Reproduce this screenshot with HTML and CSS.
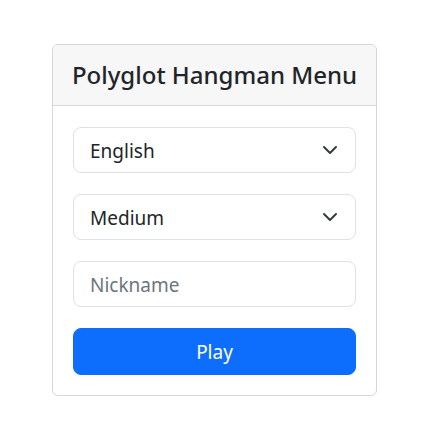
FILE: index.html
```html
<!DOCTYPE html>
<html lang="en">
<head>
<meta charset="utf-8">
<title>Polyglot Hangman Menu</title>
<link rel="stylesheet" href="styles.css">
</head>
<body>
<main class="page">
  <section class="card">
    <header class="card-header">
      <h1 class="title">Polyglot Hangman Menu</h1>
    </header>
    <form class="card-body">
      <div class="select">
        <span class="select-value">English</span>
        <svg class="chevron" viewBox="0 0 16 16" width="16" height="16"><path d="m2 5 6 6 6-6" fill="none" stroke="#343a40" stroke-width="2" stroke-linecap="round" stroke-linejoin="round"/></svg>
      </div>
      <div class="select">
        <span class="select-value">Medium</span>
        <svg class="chevron" viewBox="0 0 16 16" width="16" height="16"><path d="m2 5 6 6 6-6" fill="none" stroke="#343a40" stroke-width="2" stroke-linecap="round" stroke-linejoin="round"/></svg>
      </div>
      <input class="input" type="text" placeholder="Nickname">
      <button class="btn" type="button">Play</button>
    </form>
  </section>
</main>
</body>
</html>
```

FILE: styles.css
```css
html, body {
  margin: 0;
  padding: 0;
  background: #fff;
}
body {
  font-family: "Noto Sans", "Open Sans", sans-serif;
  color: #212529;
}
.page {
  display: flex;
  justify-content: center;
  padding-top: 44px;
}
.card {
  width: 325px;
  box-sizing: border-box;
  border: 1px solid #d6d6d6;
  border-radius: 6px;
  background: #fff;
  overflow: hidden;
}
.card-header {
  height: 61px;
  box-sizing: border-box;
  background: #f7f7f7;
  border-bottom: 1px solid #d6d6d6;
  display: flex;
  align-items: center;
  justify-content: center;
}
.title {
  margin: 0;
  font-size: 24px;
  font-weight: 500;
  line-height: 1.2;
  color: #212529;
}
.card-body {
  padding: 21px 20px 20px;
  display: flex;
  flex-direction: column;
  gap: 21px;
  margin: 0;
}
.select, .input {
  height: 46px;
  box-sizing: border-box;
  border: 1px solid #dee2e6;
  border-radius: 8px;
  background: #fff;
  font-family: inherit;
  font-size: 19px;
  color: #212529;
}
.select {
  display: flex;
  align-items: center;
  justify-content: space-between;
  padding: 1px 17px 0 16px;
}
.chevron {
  display: block;
  margin-top: -1px;
}
.input {
  width: 100%;
  padding: 1px 16px 0;
  outline: none;
}
.input::placeholder {
  color: #6c757d;
  opacity: 1;
}
.btn {
  height: 47px;
  border: 1px solid #0d6efd;
  border-radius: 8px;
  background: #0d6efd;
  color: #fff;
  font-family: inherit;
  font-size: 19px;
  padding-top: 1px;
  cursor: pointer;
}
```
